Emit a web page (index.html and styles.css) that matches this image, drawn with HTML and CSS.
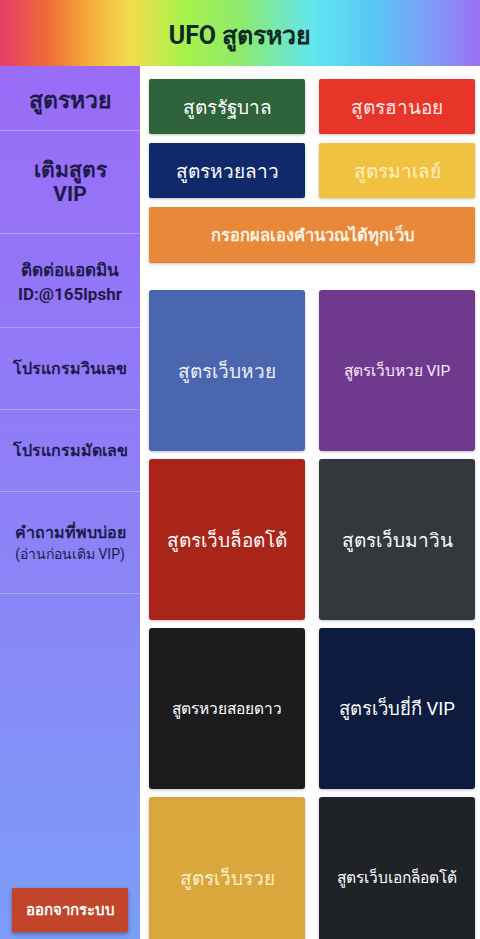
FILE: index.html
```html
<!DOCTYPE html>
<html>
    <head>
        <meta charset="UTF-8">
        <title>UFO สูตรหวย</title>
        <link rel="stylesheet" href="styles.css">
    </head>
    <body>
        <header class="top-bar">
            <h1>UFO สูตรหวย</h1>
        </header>

        <div class="layout">
            <nav class="side-menu">
                <div class="menu-item item-main">สูตรหวย</div>
                <div class="menu-item item-vip"><span>เติมสูตร</span><span>VIP</span></div>
                <div class="menu-item item-contact"><span>ติดต่อแอดมิน</span><span>ID:@165lpshr</span></div>
                <div class="menu-item item-short">โปรแกรมวินเลข</div>
                <div class="menu-item item-short">โปรแกรมมัดเลข</div>
                <div class="menu-item item-faq"><span>คำถามที่พบบ่อย</span><span class="note">(อ่านก่อนเติม VIP)</span></div>

                <div class="logout">ออกจากระบบ</div>
            </nav>

            <main class="content">
                <div class="btn-grid">
                    <div class="btn green">สูตรรัฐบาล</div>
                    <div class="btn red">สูตรฮานอย</div>
                    <div class="btn navy">สูตรหวยลาว</div>
                    <div class="btn yellow">สูตรมาเลย์</div>
                    <div class="btn orange wide">กรอกผลเองคำนวณได้ทุกเว็บ</div>
                </div>

                <div class="tile-grid">
                    <div class="tile blue">สูตรเว็บหวย</div>
                    <div class="tile purple small">สูตรเว็บหวย VIP</div>
                    <div class="tile crimson">สูตรเว็บล็อตโต้</div>
                    <div class="tile slate">สูตรเว็บมาวิน</div>
                    <div class="tile black small">สูตรหวยสอยดาว</div>
                    <div class="tile midnight">สูตรเว็บยี่กี VIP</div>
                    <div class="tile gold">สูตรเว็บรวย</div>
                    <div class="tile coal small">สูตรเว็บเอกล็อตโต้</div>
                </div>
            </main>
        </div>
    </body>
</html>
```

FILE: styles.css
```css
* {
	margin: 0;
	padding: 0;
	box-sizing: border-box;
}

body {
	width: 480px;
	height: 939px;
	overflow: hidden;
	font-family: Roboto, "Noto Sans", sans-serif;
	background: #ffffff;
	display: flex;
	flex-direction: column;
}

.top-bar {
	height: 66px;
	flex-shrink: 0;
	display: flex;
	align-items: center;
	justify-content: center;
	background: linear-gradient(90deg, #e63d6c 0%, #ef6b36 10%, #f4a83c 18%, #f5dc4a 27%, #a8f24c 38%, #8eea6c 50%, #62e6ee 65%, #58c6f6 78%, #7aa2f6 88%, #9b70f5 100%);
}

.top-bar h1 {
	font-size: 25px;
	font-weight: bold;
	color: #0c2a22;
	padding-top: 3px;
}

.layout {
	flex: 1;
	display: flex;
	min-height: 0;
}

.side-menu {
	width: 140px;
	flex-shrink: 0;
	display: flex;
	flex-direction: column;
	background: linear-gradient(180deg, #9a6cf7 0%, #8c82f7 55%, #7b9ef7 100%);
	color: #1d1b4c;
}

.menu-item {
	display: flex;
	flex-direction: column;
	align-items: center;
	justify-content: center;
	text-align: center;
	font-weight: bold;
	font-size: 16px;
	line-height: 22px;
	border-bottom: 1px solid rgba(255, 255, 255, 0.3);
}

.item-main {
	height: 65px;
	font-size: 23px;
	padding-top: 6px;
}

.item-vip {
	height: 103px;
	font-size: 21px;
	line-height: 24px;
}

.item-contact {
	height: 94px;
	font-size: 17px;
	line-height: 24px;
	padding-top: 2px;
}

.item-short {
	height: 82px;
}

.item-faq {
	height: 102px;
}

.note {
	font-weight: normal;
	font-size: 14px;
	line-height: 20px;
}

.logout {
	margin: auto 12px 7px;
	height: 44px;
	background: #c2452b;
	color: #ffffff;
	font-weight: bold;
	font-size: 15px;
	display: flex;
	align-items: center;
	justify-content: center;
	box-shadow: 0 2px 4px rgba(0, 0, 0, 0.35);
}

.content {
	flex: 1;
	padding: 13px 5px 0 9px;
	background: #ffffff;
}

.btn-grid {
	display: grid;
	grid-template-columns: 156px 156px;
	column-gap: 14px;
	row-gap: 9px;
}

.btn {
	height: 55px;
	border-radius: 2px;
	display: flex;
	align-items: center;
	justify-content: center;
	color: #ffffff;
	font-size: 19px;
	box-shadow: 0 1px 3px rgba(0, 0, 0, 0.25);
}

.wide {
	grid-column: span 2;
	font-size: 16.5px;
	font-weight: bold;
	height: 56px;
}

.green { background: #2e623b; }
.red { background: #e8352a; color: #ffe9e9; }
.navy { background: #10296b; }
.yellow { background: #f1c23f; color: #fdf1c4; }
.orange { background: #e8893a; color: #fff3e6; }

.tile-grid {
	margin-top: 27px;
	display: grid;
	grid-template-columns: 156px 156px;
	grid-auto-rows: 161px;
	column-gap: 14px;
	row-gap: 8px;
}

.tile {
	border-radius: 3px;
	display: flex;
	align-items: center;
	justify-content: center;
	text-align: center;
	color: #ffffff;
	font-size: 19px;
	box-shadow: 0 1px 3px rgba(0, 0, 0, 0.25);
}

.tile.small {
	font-size: 15.5px;
}

.blue { background: #4a66ae; color: #eef0ff; }
.purple { background: #6f3a8d; color: #fbe8ff; font-size: 16px; }
.crimson { background: #a9251a; }
.slate { background: #33383d; }
.black { background: #1c1c1e; }
.midnight { background: #0d1b3f; font-size: 18.5px; }
.gold { background: #d9a73b; color: #fdf0cc; }
.coal { background: #1f2227; }
```
